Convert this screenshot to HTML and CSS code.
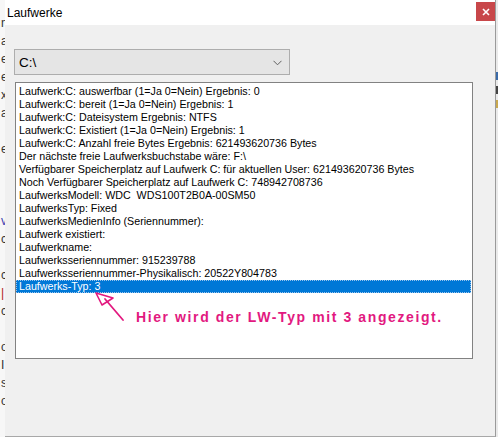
FILE: index.html
```html
<!DOCTYPE html>
<html lang="de">
<head>
<meta charset="utf-8">
<title>Laufwerke</title>
<link rel="stylesheet" href="styles.css">
</head>
<body>
<div class="screen">
  <div class="bg-left">
    <span>n</span><span>a</span><span>e</span><span>e</span><span>x</span><span>a</span><span>&nbsp;</span><span>e</span><span>&nbsp;</span><span>&nbsp;</span><span>&nbsp;</span><span class="blue">v</span><span>c</span><span>&nbsp;</span><span>c</span><span class="red">|</span><span>c</span><span>&nbsp;</span><span>o</span><span>I</span><span>s</span><span>o</span>
  </div>
  <div class="dialog">
    <div class="titlebar">
      <span class="title">Laufwerke</span>
      <button class="close" aria-label="Schließen">
        <svg width="8" height="8" viewBox="0 0 8 8"><path d="M1 1 L7 7 M7 1 L1 7" stroke="#fff" stroke-width="1.6"/></svg>
      </button>
    </div>
    <div class="content">
      <div class="combo">
        <span class="combo-text">C:\</span>
        <svg class="chev" width="9" height="6" viewBox="0 0 9 6"><path d="M0.5 0.8 L4.5 4.8 L8.5 0.8" fill="none" stroke="#606060" stroke-width="1"/></svg>
      </div>
      <div class="listbox">
        <div class="item">Laufwerk:C: auswerfbar (1=Ja 0=Nein) Ergebnis: 0</div>
        <div class="item">Laufwerk:C: bereit (1=Ja 0=Nein) Ergebnis: 1</div>
        <div class="item">Laufwerk:C: Dateisystem Ergebnis: NTFS</div>
        <div class="item">Laufwerk:C: Existiert (1=Ja 0=Nein) Ergebnis: 1</div>
        <div class="item">Laufwerk:C: Anzahl freie Bytes Ergebnis: 621493620736 Bytes</div>
        <div class="item">Der nächste freie Laufwerksbuchstabe wäre: F:\</div>
        <div class="item">Verfügbarer Speicherplatz auf Laufwerk C: für aktuellen User: 621493620736 Bytes</div>
        <div class="item">Noch Verfügbarer Speicherplatz auf Laufwerk C: 748942708736</div>
        <div class="item">LaufwerksModell: WDC&nbsp; WDS100T2B0A-00SM50</div>
        <div class="item">LaufwerksTyp: Fixed</div>
        <div class="item">LaufwerksMedienInfo (Seriennummer):</div>
        <div class="item">Laufwerk existiert:</div>
        <div class="item">Laufwerkname:</div>
        <div class="item">Laufwerksseriennummer: 915239788</div>
        <div class="item">Laufwerksseriennummer-Physikalisch: 20522Y804783</div>
        <div class="item selected">Laufwerks-Typ: 3</div>
        <svg class="arrow" width="34" height="34" viewBox="0 0 34 34">
          <path d="M2 2 L19 7 L8 14 Z" fill="none" stroke="#e2197f" stroke-width="1.6" stroke-linejoin="round"/>
          <path d="M11 8 L29 29" fill="none" stroke="#e2197f" stroke-width="1.8" stroke-linecap="round"/>
        </svg>
        <div class="note">Hier wird der LW-Typ mit 3 angezeigt.</div>
      </div>
    </div>
  </div>
  <div class="bg-right">
    <span class="r1"></span><span class="r2"></span><span class="r3"></span>
  </div>
</div>
</body>
</html>
```
FILE: styles.css
```css
* { box-sizing: border-box; }
html, body { margin: 0; padding: 0; }
body {
  width: 498px;
  height: 437px;
  overflow: hidden;
  background: #f3f3f3;
  font-family: "Liberation Sans", Arial, sans-serif;
}
.screen {
  display: flex;
  width: 498px;
  height: 437px;
}
.bg-left {
  width: 5px;
  flex: none;
  background: #f7f7f7;
  overflow: hidden;
  display: flex;
  flex-direction: column;
  align-items: flex-end;
  padding-top: 14px;
  font-size: 12px;
  line-height: 18px;
  color: #333;
}
.bg-left span { display: block; width: 6px; text-align: left; margin-right: -2px; }
.bg-left .blue { color: #3b3fb0; }
.bg-left .red { color: #b02020; }
.dialog {
  width: 491px;
  flex: none;
  height: 437px;
  display: flex;
  flex-direction: column;
  background: #f0f0f0;
  border-right: 1px solid #9a9a9a;
  border-bottom: 1px solid #a8a8a8;
}
.titlebar {
  height: 25px;
  background: #fff;
  display: flex;
  align-items: flex-start;
  justify-content: space-between;
  padding-left: 2px;
}
.title {
  font-size: 12px;
  line-height: 12px;
  margin-top: 7px;
  color: #000;
}
.close {
  width: 19px;
  height: 19px;
  margin-top: 2px;
  border: 0;
  padding: 0;
  background: #c8474a;
  display: flex;
  align-items: center;
  justify-content: center;
}
.content {
  padding: 24px 0 0 9px;
  display: flex;
  flex-direction: column;
  gap: 7px;
}
.combo {
  width: 276px;
  height: 26px;
  background: #e5e5e5;
  border: 1px solid #adadad;
  display: flex;
  align-items: center;
  justify-content: space-between;
  padding: 0 7px 0 4px;
}
.combo-text {
  font-size: 13.5px;
  color: #000;
}
.chev { margin-top: 1px; }
.listbox {
  position: relative;
  width: 458px;
  height: 277px;
  margin-left: 1px;
  background: #fff;
  border: 1px solid #828282;
  padding: 2px 0 0 0;
  font-size: 10.7px;
  line-height: 13px;
  color: #000;
}
.item {
  height: 13px;
  padding-left: 3px;
  white-space: nowrap;
}
.item.selected {
  background: #0078d7;
  color: #fff;
  outline: 1px dotted #9ac4ec;
  outline-offset: -1px;
  margin-right: 1px;
}
.arrow {
  position: absolute;
  left: 78px;
  top: 208px;
}
.note {
  position: absolute;
  left: 120px;
  top: 226px;
  font-size: 14px;
  line-height: 16px;
  font-weight: bold;
  letter-spacing: 1.6px;
  color: #e2197f;
  white-space: nowrap;
}
.bg-right {
  width: 2px;
  flex: none;
  background: #eaeaea;
  display: flex;
  flex-direction: column;
  padding-top: 72px;
  gap: 6px;
}
.bg-right span { display: block; width: 2px; height: 8px; }
.bg-right .r1 { background: #3a6aa8; }
.bg-right .r2 { background: #444; }
.bg-right .r3 { background: #c8a850; }
```
